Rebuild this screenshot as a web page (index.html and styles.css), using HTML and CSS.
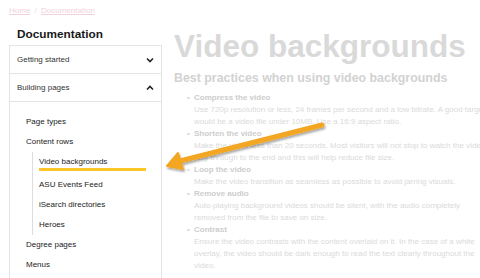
FILE: index.html
```html
<!DOCTYPE html>
<html lang="en">
<head>
    <meta charset="UTF-8">
    <title>Video backgrounds</title>
    <link rel="stylesheet" href="styles.css">
</head>
<body>
<div class="crumbs">
    <a href="javascript:">Home</a> <span class="sep">/</span> <a href="javascript:">Documentation</a>
</div>
<div class="page">
    <div class="side">
        <h2 class="side-title">Documentation</h2>
        <div class="acc">
            <div class="acc-head">
                <span>Getting started</span>
                <svg width="8" height="6" viewBox="0 0 8 6"><path d="M1 1.5 4 4.5 7 1.5" fill="none" stroke="#222" stroke-width="1.6"/></svg>
            </div>
            <div class="acc-head">
                <span>Building pages</span>
                <svg width="8" height="6" viewBox="0 0 8 6"><path d="M1 4.5 4 1.5 7 4.5" fill="none" stroke="#222" stroke-width="1.6"/></svg>
            </div>
            <div class="acc-body">
                <a class="nav" href="javascript:">Page types</a>
                <a class="nav" href="javascript:">Content rows</a>
                <div class="sub">
                    <a class="nav active" href="javascript:">Video backgrounds</a>
                    <a class="nav" href="javascript:">ASU Events Feed</a>
                    <a class="nav" href="javascript:">iSearch directories</a>
                    <a class="nav" href="javascript:">Heroes</a>
                </div>
                <a class="nav" href="javascript:">Degree pages</a>
                <a class="nav" href="javascript:">Menus</a>
            </div>
        </div>
    </div>
    <div class="main">
        <h1>Video backgrounds</h1>
        <h3>Best practices when using video backgrounds</h3>
        <ul>
            <li><b>Compress the video</b><p>Use 720p resolution or less, 24 frames per second and a low bitrate. A good target would be a video file under 10MB. Use a 16:9 aspect ratio.</p></li>
            <li><b>Shorten the video</b><p>Make the video less than 20 seconds. Most visitors will not stop to watch the video fully through to the end and this will help reduce file size.</p></li>
            <li><b>Loop the video</b><p>Make the video transition as seamless as possible to avoid jarring visuals.</p></li>
            <li><b>Remove audio</b><p>Auto-playing background videos should be silent, with the audio completely removed from the file to save on size.</p></li>
            <li><b>Contrast</b><p>Ensure the video contrasts with the content overlaid on it. In the case of a white overlay, the video should be dark enough to read the text clearly throughout the video.</p></li>
        </ul>
    </div>
</div>
<svg class="arrow" width="480" height="278" viewBox="0 0 480 278">
    <defs>
        <filter id="sh" x="-10%" y="-30%" width="120%" height="160%">
            <feDropShadow dx="1" dy="2" stdDeviation="1.2" flood-color="#000" flood-opacity="0.35"/>
        </filter>
    </defs>
    <g filter="url(#sh)">
        <line x1="322" y1="125" x2="176" y2="162" stroke="#f3a622" stroke-width="5" stroke-linecap="round"/>
        <path d="M167 166 L178 153 L183 169 Z" fill="#f3a622" stroke="#f3a622" stroke-width="2" stroke-linejoin="round"/>
    </g>
</svg>
</body>
</html>
```

FILE: styles.css
```css
*{
    margin: 0;
    padding: 0;
    box-sizing: border-box;
}
body{
    font-family: "Liberation Sans", Arial, sans-serif;
    background: #fff;
    width: 480px;
    height: 278px;
    overflow: hidden;
    position: relative;
}
.crumbs{
    font-size: 8px;
    padding: 6px 0 0 9px;
    height: 18px;
    color: #f1e0e5;
}
.crumbs a{
    color: #f0d2da;
}
.crumbs .sep{
    margin: 0 2px;
}
.page{
    display: flex;
}
.side{
    width: 153px;
    margin-left: 9px;
    flex: none;
}
.side-title{
    font-size: 11.8px;
    font-weight: bold;
    color: #191919;
    padding: 9px 0 0 8px;
    height: 27px;
    line-height: 14px;
}
.acc{
    border: 1px solid #e4e4e4;
    border-bottom: none;
    height: 240px;
}
.acc-head{
    display: flex;
    justify-content: space-between;
    align-items: center;
    height: 28px;
    padding: 0 7px 0 7px;
    border-bottom: 1px solid #e4e4e4;
    font-size: 8px;
    color: #333;
}
.acc-body{
    padding: 10px 0 0 16px;
}
.nav{
    display: block;
    height: 20px;
    line-height: 20px;
    font-size: 8px;
    color: #222;
    text-decoration: none;
}
.sub{
    margin-left: 6px;
    padding: 0 0 0 6px;
    border-left: 1px solid #ddd;
}
.nav.active{
    position: relative;
    height: 23px;
}
.nav.active::after{
    content: "";
    position: absolute;
    left: 0;
    top: 16px;
    width: 107px;
    height: 3px;
    background: #ffc627;
}
.main{
    padding: 10px 0 0 12px;
    color: #d3d3d3;
    overflow: hidden;
    flex: 1;
}
h1{
    font-size: 31.5px;
    font-weight: bold;
    color: #d9d9d9;
    line-height: 36px;
    white-space: nowrap;
}
h3{
    font-size: 12.4px;
    font-weight: bold;
    color: #d2d2d2;
    margin-top: 7px;
    line-height: 15px;
    white-space: nowrap;
}
ul{
    margin-top: 6px;
    padding-left: 20px;
    font-size: 8px;
    line-height: 12px;
}
li{
    list-style: none;
    position: relative;
}
li::before{
    content: "•";
    position: absolute;
    left: -7px;
    color: #d6d6d6;
}
li b{
    color: #cdcdcd;
}
li p{
    width: 296px;
    color: #dadada;
}
.arrow{
    position: absolute;
    left: 0;
    top: 0;
}
```
